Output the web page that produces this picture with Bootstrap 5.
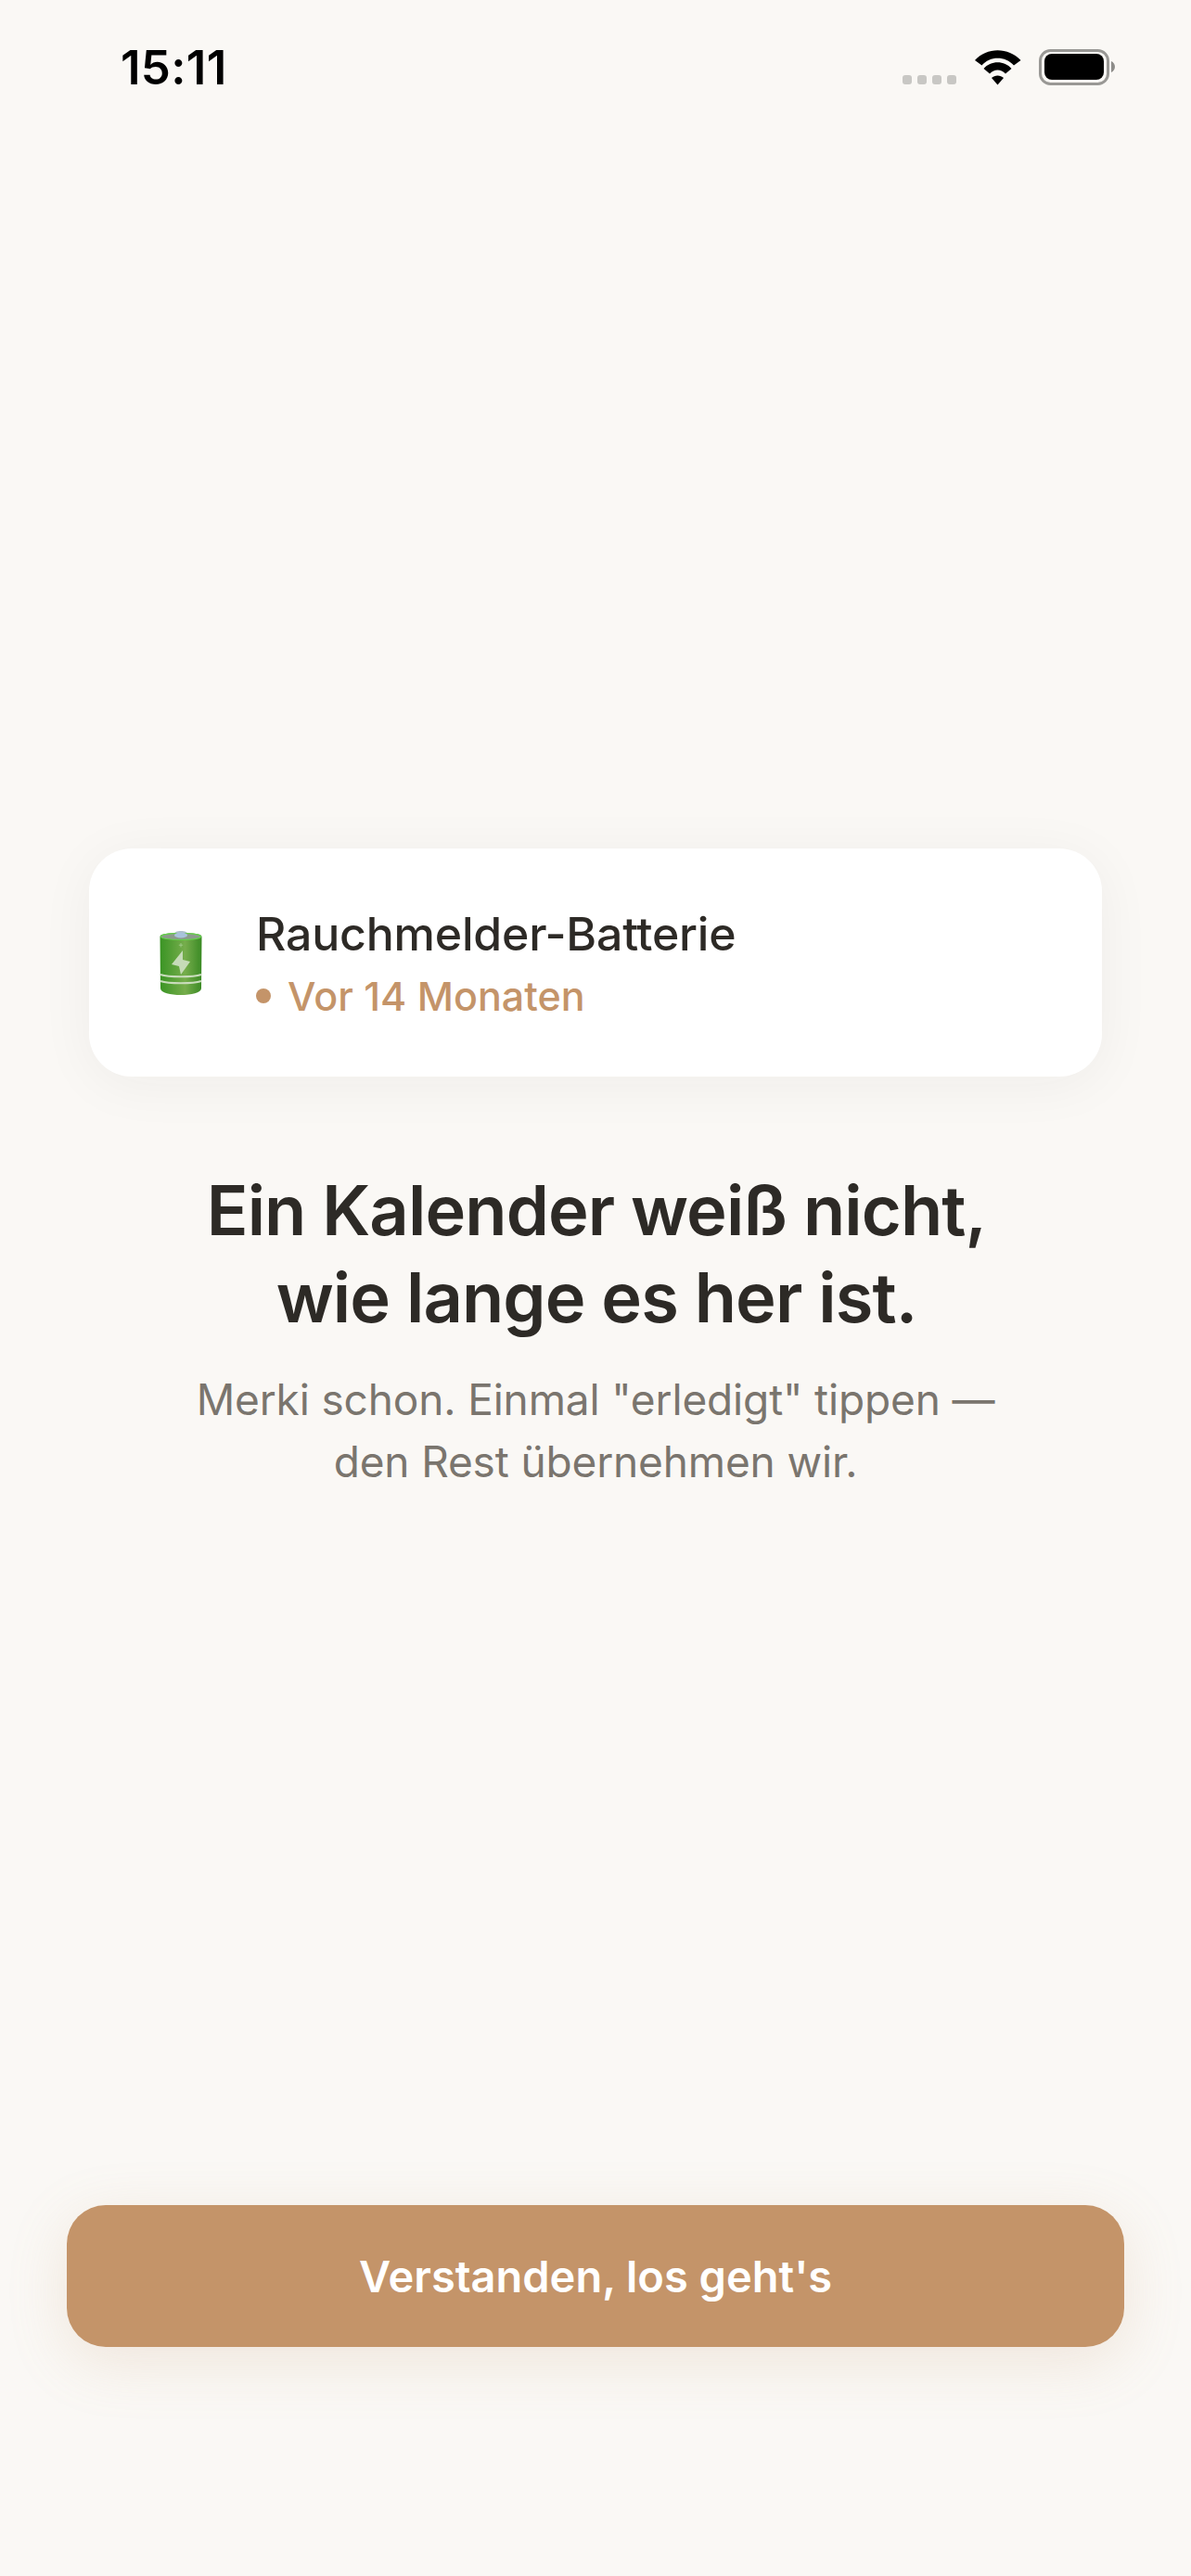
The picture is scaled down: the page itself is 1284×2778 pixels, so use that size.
<!DOCTYPE html>
<html lang="de">
<head>
  <meta charset="UTF-8" />
  <meta name="viewport" content="width=device-width, initial-scale=1.0"/>
  <title>Merki</title>
  <link href="https://cdn.jsdelivr.net/npm/bootstrap@5.3.3/dist/css/bootstrap.min.css" rel="stylesheet">
  <style>
    body {
      background-color: #faf8f5;
      font-family: "Inter", "Liberation Sans", sans-serif;
      color: #2d2a26;
    }
    .screen { width: 1284px; height: 2778px; }
    .status-bar { height: 150px; padding: 43px 82px 0 130px; }
    .status-time { font-size: 51px; font-weight: 600; color: #000; line-height: 60px; letter-spacing: 0.3px; }
    .status-dots { gap: 6px; margin-top: 38px; margin-right: 20px; }
    .status-dots i { width: 10px; height: 10px; border-radius: 3px; background: #c8c7c4; display: block; }
    .status-wifi { margin-top: 11px; margin-right: 19px; }
    .status-batt { margin-top: 10px; }
    .content-area { padding-top: 765px; }
    .item-card {
      margin: 0 96px;
      height: 246px;
      background: #fff;
      border-radius: 46px;
      box-shadow: 0 8px 60px rgba(45, 42, 38, 0.05);
      padding: 0 56px 0 76px;
    }
    .item-icon { width: 46px; height: 69px; margin-right: 58px; }
    .item-name { font-size: 50px; line-height: 62px; font-weight: 500; letter-spacing: -0.2px; padding-top: 2px; }
    .item-age { font-size: 43px; line-height: 56px; font-weight: 500; color: #c49469; margin-top: 8px; }
    .age-dot { width: 16px; height: 16px; border-radius: 50%; background: #c49469; margin-right: 18px; }
    .headline { font-size: 74px; line-height: 94px; font-weight: 600; letter-spacing: -0.9px; margin: 97px 0 0; padding-left: 2px; color: #2d2a26; }
    .subline { font-size: 46px; line-height: 67px; letter-spacing: -0.15px; color: #7a756e; margin: 30px 0 0; }
    .bottom-area { padding: 0 72px 247px; }
    .btn-done {
      height: 153px;
      border: 0;
      border-radius: 42px;
      background: #c49469;
      color: #fff;
      font-size: 47px;
      font-weight: 600;
      padding-top: 8px;
      box-shadow: 0 16px 64px rgba(196, 148, 105, 0.18);
    }
  </style>
</head>
<body class="m-0">
  <div class="screen d-flex flex-column overflow-hidden">
    <div class="status-bar d-flex align-items-start justify-content-between flex-shrink-0">
      <div class="status-time">15:11</div>
      <div class="d-flex align-items-start">
        <div class="status-dots d-flex"><i></i><i></i><i></i><i></i></div>
        <svg class="status-wifi" width="50" height="38" viewBox="0 0 50 38">
          <path d="M0 11 C13 -3.500 36 -3.500 49.500 11 L42 16.500 C33 6 16 6 7.500 16.500 Z" fill="#000"/>
          <path d="M9.500 20 C17 11 32 11 39.500 20 L33 25.500 C28 20 21 20 16 25.500 Z" fill="#000"/>
          <path d="M18 30 C21.500 26.500 27.500 26.500 31 30 L24.500 37.500 Z" fill="#000"/>
        </svg>
        <svg class="status-batt" width="82" height="40" viewBox="0 0 82 40">
          <rect x="1.500" y="1.500" width="73" height="36" rx="11" fill="none" stroke="#999895" stroke-width="3"/>
          <rect x="6" y="5" width="64" height="28" rx="8" fill="#000"/>
          <path d="M78 13 C80.500 14 82 16.500 82 19 C82 21.500 80.500 24 78 25 Z" fill="#8e8d8a"/>
        </svg>
      </div>
    </div>

    <div class="content-area flex-grow-1">
      <div class="item-card d-flex align-items-center">
        <svg class="item-icon flex-shrink-0" viewBox="0 0 46 69">
          <defs>
            <linearGradient id="batteryBody" x1="0" x2="1" y1="0" y2="0">
              <stop offset="0" stop-color="#3a9424"/>
              <stop offset="0.6" stop-color="#76ad4c"/>
              <stop offset="1" stop-color="#3a8a24"/>
            </linearGradient>
          </defs>
          <path d="M15 5 C15 1 19 0 23 0 C27 0 31 1 31 5 Z" fill="#aebfcc"/>
          <path d="M0.500 6 C0.500 3 10 2 23 2 C36 2 45.500 3 45.500 6 L45 62 C45 66.500 34 69 23 69 C12 69 1 66.500 1 62 Z" fill="url(#batteryBody)"/>
          <ellipse cx="23" cy="6" rx="21.500" ry="3.500" fill="#8c9b8c" stroke="#64d24a" stroke-width="1.200"/>
          <ellipse cx="23" cy="4.500" rx="7" ry="3" fill="#a9c3dc"/>
          <path d="M25 21 L13 36 L21 38 L23 47 L33 33 L25 31 Z" fill="#c6dbb8"/>
          <path d="M1 47 C10 50 36 50 45 47" fill="none" stroke="#c9dcbc" stroke-width="2.200"/>
          <path d="M1 54 C10 57 36 57 45 54" fill="none" stroke="#c9dcbc" stroke-width="2.200"/>
          <path d="M23 13 V17.500 M20.800 15.200 H25.200" stroke="#a8cf92" stroke-width="0.800"/>
        </svg>
        <div>
          <div class="item-name">Rauchmelder-Batterie</div>
          <div class="item-age d-flex align-items-center"><span class="age-dot"></span>Vor 14 Monaten</div>
        </div>
      </div>
      <h1 class="headline text-center">Ein Kalender weiß nicht,<br>wie lange es her ist.</h1>
      <p class="subline text-center">Merki schon. Einmal "erledigt" tippen —<br>den Rest übernehmen wir.</p>
    </div>

    <div class="bottom-area flex-shrink-0">
      <button type="button" class="btn btn-done w-100">Verstanden, los geht's</button>
    </div>
  </div>
  <script src="https://cdn.jsdelivr.net/npm/bootstrap@5.3.3/dist/js/bootstrap.bundle.min.js"></script>
</body>
</html>
